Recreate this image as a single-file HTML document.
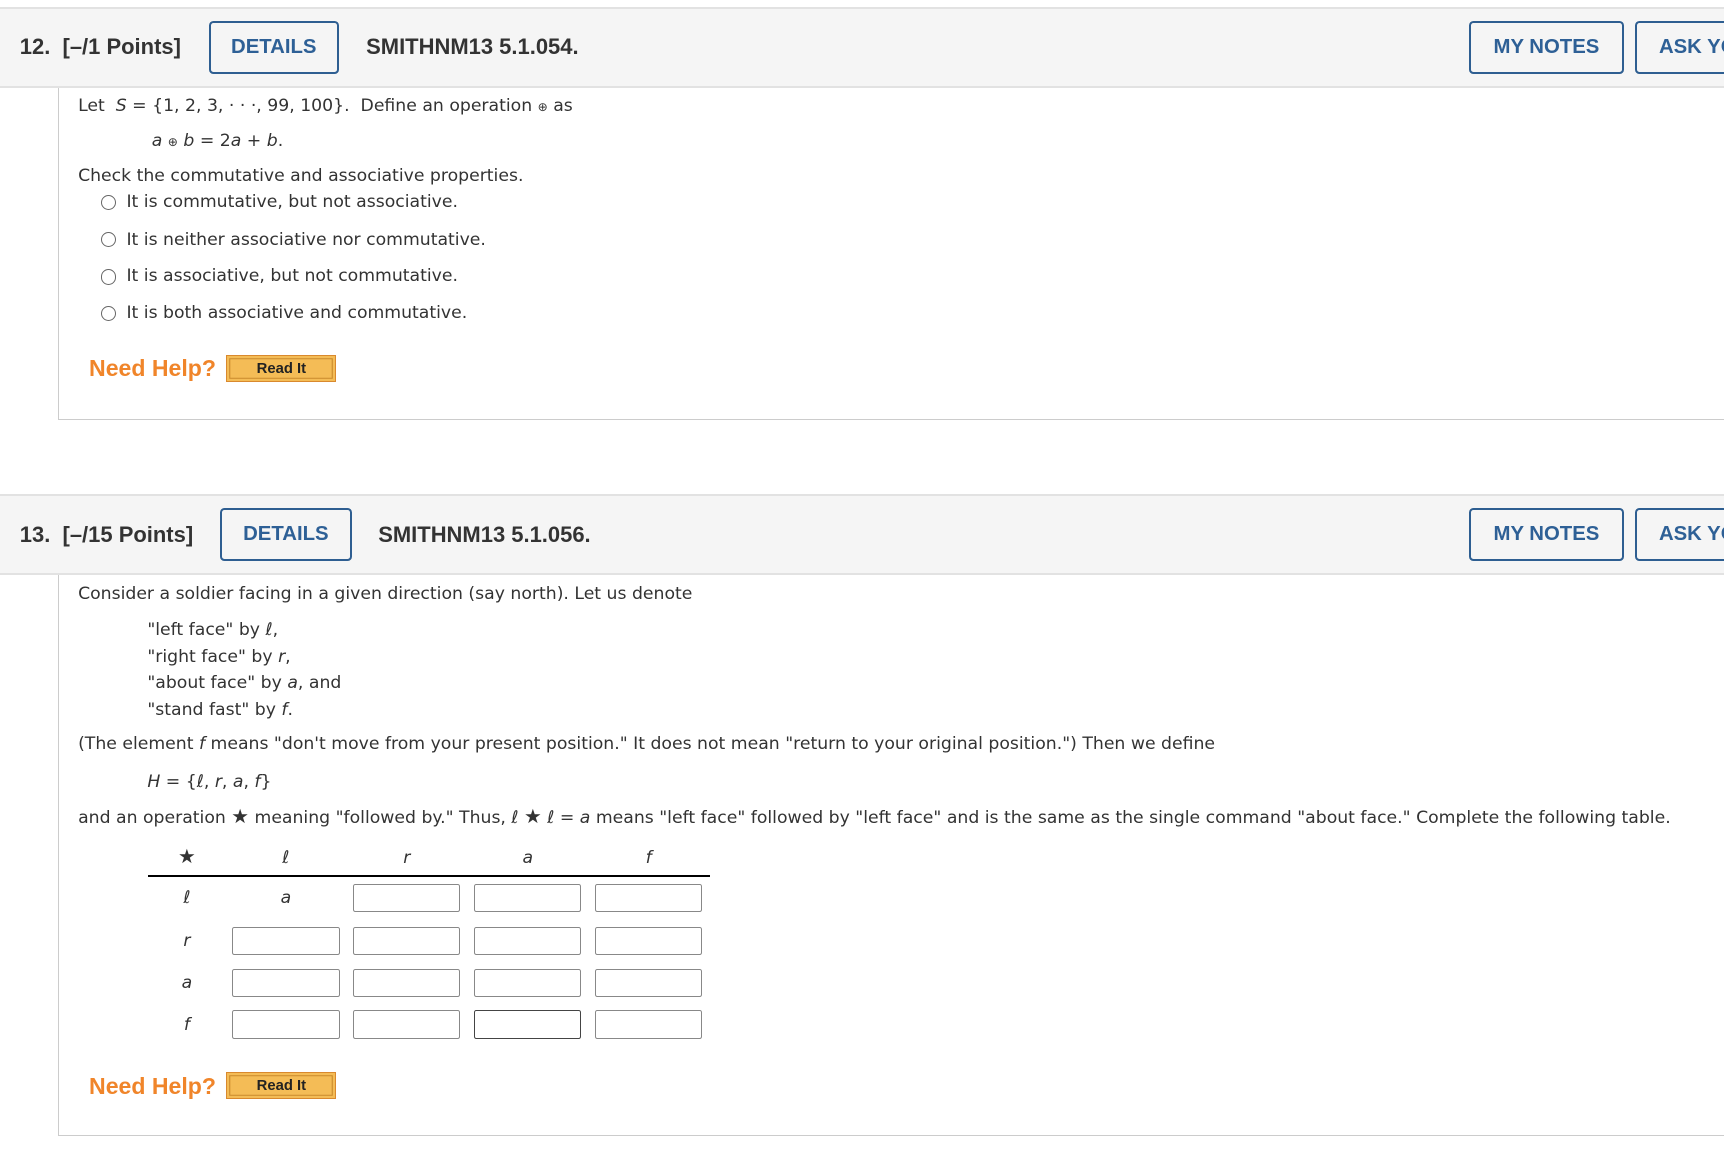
<!DOCTYPE html>
<html><head><meta charset="utf-8">
<style>
html,body{margin:0;padding:0;background:#fff;overflow:hidden}
body{width:1568px;height:1048px;zoom:1.0995;position:relative;font-family:"DejaVu Sans","Liberation Sans",sans-serif;color:#333}
.a{position:absolute;white-space:nowrap}
.band{position:absolute;left:0;width:1568px;height:70px;background:#f5f5f5;border-top:2px solid #e2e2e2;border-bottom:2px solid #e2e2e2}
.h{font-family:"Liberation Sans",sans-serif;font-weight:bold;font-size:20px;color:#333;line-height:24px}
.btn{position:absolute;border:2px solid #2e5e91;border-radius:4px;color:#2e6096;font-family:"Liberation Sans",sans-serif;font-weight:bold;font-size:18.5px;display:flex;align-items:center;justify-content:center;box-sizing:border-box;white-space:nowrap;overflow:hidden}
.t{font-size:15.7px;line-height:20px}
i{font-style:italic}
.st{font-size:18px;font-weight:bold;line-height:15px}
.rad{position:absolute;width:12px;height:12px;border:1px solid #666;border-radius:50%;background:#fff}
.box{position:absolute;border-left:1px solid #ccc;border-bottom:1px solid #ccc;left:53px;width:1515px}
.nh{font-family:"Liberation Sans",sans-serif;font-weight:bold;font-size:21px;color:#f0852a}
.ri{position:absolute;width:98px;height:23px;background:#f4bc56;border:1px solid #d9892e;box-shadow:inset 0 0 0 2px #f4bc56,inset 0 0 0 3px #c98a2c;font-family:"Liberation Sans",sans-serif;font-weight:bold;font-size:13.5px;color:#222;text-align:center;line-height:24px}
.in{position:absolute;width:96px;height:24px;border:1px solid #888;border-radius:2px;background:#fff}
.c{position:absolute;text-align:center;width:60px;font-size:15.7px;line-height:20px}
</style></head><body>

<div class="band" style="top:6px"></div>
<div class="a h" style="left:18px;top:31px">12.&nbsp; [–/1 Points]</div>
<div class="btn" style="left:190px;top:19px;width:118px;height:48px">DETAILS</div>
<div class="a h" style="left:333px;top:31px">SMITHNM13 5.1.054.</div>
<div class="btn" style="left:1336px;top:19px;width:141px;height:48px">MY NOTES</div>
<div class="btn" style="left:1487px;top:19px;width:120px;height:48px;justify-content:flex-start;padding-left:20px">ASK YOUR</div>

<div class="box" style="top:80px;height:301px"></div>
<div class="a t" style="left:71px;top:87px">Let&nbsp; <i>S</i> = {1, 2, 3, · · ·, 99, 100}.&nbsp; Define an operation <span style="font-size:11px">⊕</span> as</div>
<div class="a t" style="left:138px;top:119px"><i>a</i> <span style="font-size:11px">⊕</span> <i>b</i> = 2<i>a</i> + <i>b</i>.</div>
<div class="a t" style="left:71px;top:151px">Check the commutative and associative properties.</div>
<div class="rad" style="left:92px;top:177px"></div><div class="a t" style="left:115px;top:175px">It is commutative, but not associative.</div>
<div class="rad" style="left:92px;top:211px"></div><div class="a t" style="left:115px;top:209px">It is neither associative nor commutative.</div>
<div class="rad" style="left:92px;top:245px"></div><div class="a t" style="left:115px;top:242px">It is associative, but not commutative.</div>
<div class="rad" style="left:92px;top:278px"></div><div class="a t" style="left:115px;top:276px">It is both associative and commutative.</div>
<div class="a nh" style="left:81px;top:323px">Need Help?</div>
<div class="ri" style="left:206px;top:323px">Read It</div>

<div class="band" style="top:449px"></div>
<div class="a h" style="left:18px;top:475px">13.&nbsp; [–/15 Points]</div>
<div class="btn" style="left:200px;top:462px;width:120px;height:48px">DETAILS</div>
<div class="a h" style="left:344px;top:475px">SMITHNM13 5.1.056.</div>
<div class="btn" style="left:1336px;top:462px;width:141px;height:48px">MY NOTES</div>
<div class="btn" style="left:1487px;top:462px;width:120px;height:48px;justify-content:flex-start;padding-left:20px">ASK YOUR</div>

<div class="box" style="top:523px;height:509px"></div>
<div class="a t" style="left:71px;top:531px">Consider a soldier facing in a given direction (say north). Let us denote</div>
<div class="a t" style="left:134px;top:564px">"left face" by ℓ,</div>
<div class="a t" style="left:134px;top:588px">"right face" by <i>r</i>,</div>
<div class="a t" style="left:134px;top:612px">"about face" by <i>a</i>, and</div>
<div class="a t" style="left:134px;top:637px">"stand fast" by <i>f</i>.</div>
<div class="a t" style="left:71px;top:668px">(The element <i>f</i> means "don't move from your present position." It does not mean "return to your original position.") Then we define</div>
<div class="a t" style="left:134px;top:702px"><i>H</i> = {ℓ, <i>r</i>, <i>a</i>, <i>f</i>}</div>
<div class="a t" style="left:71px;top:735px">and an operation <span class="st">★</span> meaning "followed by." Thus, ℓ <span class="st">★</span> ℓ = <i>a</i> means "left face" followed by "left face" and is the same as the single command "about face." Complete the following table.</div>

<div class="c" style="left:140px;top:771px"><span class="st">★</span></div>
<div class="c" style="left:230px;top:771px">ℓ</div>
<div class="c" style="left:340px;top:771px"><i>r</i></div>
<div class="c" style="left:450px;top:771px"><i>a</i></div>
<div class="c" style="left:560px;top:771px"><i>f</i></div>
<div class="a" style="left:135px;top:796px;width:511px;height:2px;background:#000"></div>

<div class="c" style="left:140px;top:808px">ℓ</div>
<div class="c" style="left:230px;top:808px"><i>a</i></div>
<div class="in" style="left:321px;top:804px"></div><div class="in" style="left:431px;top:804px"></div><div class="in" style="left:541px;top:804px"></div>

<div class="c" style="left:140px;top:847px"><i>r</i></div>
<div class="in" style="left:211px;top:843px"></div><div class="in" style="left:321px;top:843px"></div><div class="in" style="left:431px;top:843px"></div><div class="in" style="left:541px;top:843px"></div>

<div class="c" style="left:140px;top:885px"><i>a</i></div>
<div class="in" style="left:211px;top:881px"></div><div class="in" style="left:321px;top:881px"></div><div class="in" style="left:431px;top:881px"></div><div class="in" style="left:541px;top:881px"></div>

<div class="c" style="left:140px;top:923px"><i>f</i></div>
<div class="in" style="left:211px;top:919px"></div><div class="in" style="left:321px;top:919px"></div><div class="in" style="left:431px;top:919px;border-color:#444"></div><div class="in" style="left:541px;top:919px"></div>

<div class="a nh" style="left:81px;top:976px">Need Help?</div>
<div class="ri" style="left:206px;top:975px">Read It</div>
</body></html>
